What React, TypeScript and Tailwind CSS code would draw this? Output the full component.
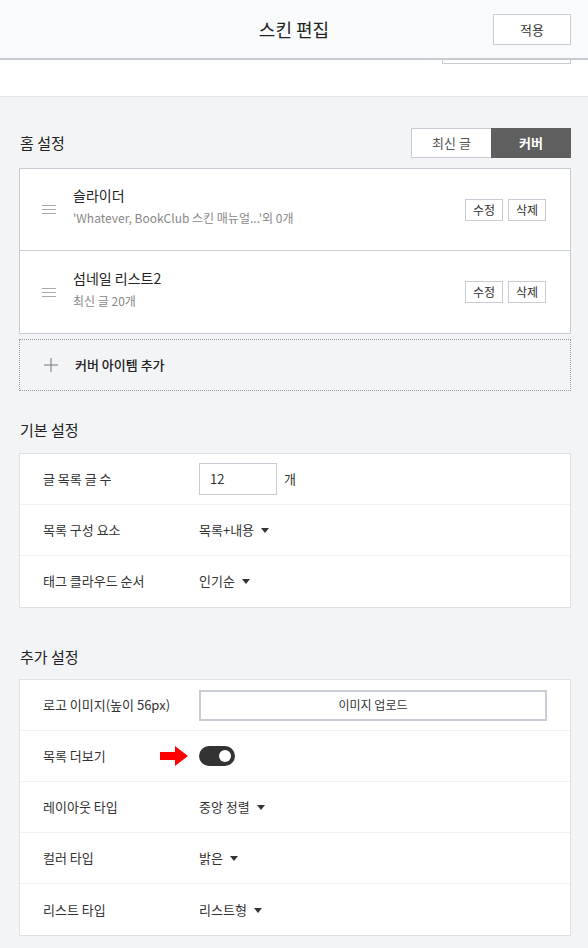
import { ReactNode } from "react";

const font = { fontFamily: '"Noto Sans CJK KR", "Noto Sans", sans-serif' };

function Caret() {
    return (
        <svg width="8" height="5" viewBox="0 0 8 5" className="ml-[7px] mt-[1px]">
            <path d="M0 0h8L4 5z" fill="#333" />
        </svg>
    );
}

function Handle() {
    return (
        <svg width="14" height="9" viewBox="0 0 14 9">
            <path d="M0 0.5h14M0 4.5h14M0 8.5h14" stroke="#aaa" strokeWidth="1" />
        </svg>
    );
}

function Row({ label, children, last }: { label: string; children: ReactNode; last?: boolean }) {
    return (
        <div className={`flex items-center h-[51px] ${last ? "" : "border-b border-[#eef0f3]"}`}>
            <div className="w-[179px] pl-[23px] text-[13px] text-[#333] shrink-0">{label}</div>
            <div className="flex items-center text-[13px] text-[#333]">{children}</div>
        </div>
    );
}

function CoverItem({ title, sub, last }: { title: string; sub: string; last?: boolean }) {
    return (
        <div className={`flex items-center h-[82px] ${last ? "" : "border-b border-[#c8ccd4]"}`}>
            <div className="w-[53px] pl-[22px] flex items-center">
                <Handle />
            </div>
            <div className="flex-1 pb-[7px]">
                <div className="text-[14px] text-[#222] leading-[20px]">{title}</div>
                <div className="text-[12px] text-[#888] leading-[18px] mt-[4px]">{sub}</div>
            </div>
            <div className="flex gap-[5px] pr-[24px]">
                <button className="h-[22px] w-[38px] border border-[#c8ccd4] bg-white text-[12px] text-[#333]">수정</button>
                <button className="h-[22px] w-[38px] border border-[#c8ccd4] bg-white text-[12px] text-[#333]">삭제</button>
            </div>
        </div>
    );
}

export default function App() {
    return (
        <div style={font} className="w-[588px] h-[948px] bg-[#f3f4f6] overflow-hidden">
            <header className="h-[60px] bg-[#f9fafb] border-b-2 border-[#c8ccd2] relative flex items-center justify-center">
                <h1 className="text-[18px] text-[#222]">스킨 편집</h1>
                <button className="absolute right-[17px] top-[14px] w-[78px] h-[31px] bg-white border border-[#c8ccd4] text-[13px] text-[#333]">적용</button>
            </header>

            <div className="h-[37px] bg-white border-b border-[#e2e5ea] overflow-hidden">
                <div className="flex items-center h-[24px] -mt-[20px] pl-[20px] pr-[17px] text-[13px]">
                    <span className="text-[#888] w-[48px]">저작권</span>
                    <span className="text-[#333]">MIT License</span>
                    <div className="ml-auto w-[129px] h-[24px] border border-[#c8ccd4] bg-white" />
                </div>
            </div>

            <section className="pl-[19px] pr-[17px] pt-[31px]">
                <div className="flex items-center justify-between mb-[10px]">
                    <h2 className="text-[15px] text-[#222] pl-[1px]">홈 설정</h2>
                    <div className="flex h-[30px] text-[13px]">
                        <button className="w-[80px] bg-white border border-[#c8ccd4] border-r-0 text-[#555]">최신 글</button>
                        <button className="w-[80px] bg-[#5f5f5f] text-white font-bold">커버</button>
                    </div>
                </div>
                <div className="bg-white border border-[#c8ccd4]">
                    <CoverItem title="슬라이더" sub="'Whatever, BookClub 스킨 매뉴얼...'외 0개" />
                    <CoverItem title="섬네일 리스트2" sub="최신 글 20개" last />
                </div>
                <div className="mt-[5px] h-[52px] border border-dotted border-[#999] flex items-center pl-[24px]">
                    <svg width="14" height="14" viewBox="0 0 14 14">
                        <path d="M7 0v14M0 7h14" stroke="#777" strokeWidth="1" />
                    </svg>
                    <span className="ml-[17px] text-[13px] text-[#222] font-medium">커버 아이템 추가</span>
                </div>
            </section>

            <section className="pl-[19px] pr-[17px] pt-[28px]">
                <h2 className="text-[15px] text-[#222] pl-[1px] mb-[11px]">기본 설정</h2>
                <div className="bg-white border border-[#dde1e6]">
                    <Row label="글 목록 글 수">
                        <input
                            defaultValue="12"
                            className="w-[78px] h-[32px] border border-[#c8ccd4] px-[10px] text-[13px] text-[#333] outline-none"
                        />
                        <span className="ml-[7px]">개</span>
                    </Row>
                    <Row label="목록 구성 요소">
                        목록+내용<Caret />
                    </Row>
                    <Row label="태그 클라우드 순서" last>
                        인기순<Caret />
                    </Row>
                </div>
            </section>

            <section className="pl-[19px] pr-[17px] pt-[38px]">
                <h2 className="text-[15px] text-[#222] pl-[1px] mb-[11px]">추가 설정</h2>
                <div className="bg-white border border-[#dde1e6]">
                    <Row label="로고 이미지(높이 56px)">
                        <button className="w-[348px] h-[31px] border-2 border-[#c8ccd4] bg-white text-[12px] text-[#333]">이미지 업로드</button>
                    </Row>
                    <Row label="목록 더보기">
                        <div className="relative">
                            <svg width="28" height="20" viewBox="0 0 28 20" className="absolute -left-[39px] -top-[10px]">
                                <path d="M0 6h15V0l13 10-13 10v-6H0z" fill="#ff0000" />
                            </svg>
                        </div>
                        <div className="w-[36px] h-[20px] rounded-full bg-[#333] flex items-center justify-end pr-[4px]">
                            <div className="w-[12px] h-[12px] rounded-full bg-white" />
                        </div>
                    </Row>
                    <Row label="레이아웃 타입">
                        중앙 정렬<Caret />
                    </Row>
                    <Row label="컬러 타입">
                        밝은<Caret />
                    </Row>
                    <Row label="리스트 타입" last>
                        리스트형<Caret />
                    </Row>
                </div>
            </section>
        </div>
    );
}
